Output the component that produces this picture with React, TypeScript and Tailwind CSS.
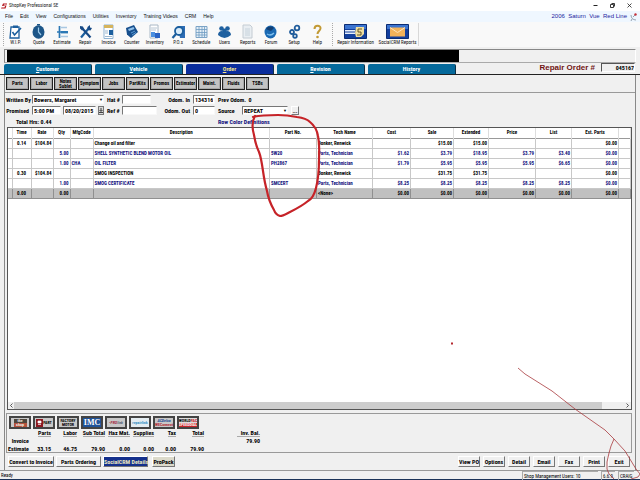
import React, { useState } from 'react';

const BLUE = '#1c5f9e';

const menus = ['File', 'Edit', 'View', 'Configurations', 'Utilities', 'Inventory', 'Training Videos', 'CRM', 'Help'];

const tools: { label: string; icon: React.ReactNode }[] = [
  {
    label: 'W.I.P.',
    icon: (
      <>
        <path d="M3 3h8v11H2z" fill="#fff" stroke={BLUE} strokeWidth="1.3" />
        <path d="M5 1.5h5V4H5z" fill={BLUE} />
        <path d="M4.5 8l2 3L13 4" fill="none" stroke={BLUE} strokeWidth="1.6" />
      </>
    ),
  },
  {
    label: 'Quote',
    icon: (
      <>
        <ellipse cx="7.5" cy="8" rx="6" ry="6.8" fill="#1d5688" />
        <path d="M7.5 3.5V8l2.5 3" fill="none" stroke="#9cc8e8" strokeWidth="1.2" />
        <path d="M6 0h3v1.5H6z" fill="#1d5688" />
      </>
    ),
  },
  {
    label: 'Estimate',
    icon: (
      <>
        <path d="M4.5 2v12M2 8h4" stroke="#2b78b5" strokeWidth="1.7" />
        <path d="M6 7h7v2.4H6z" fill="#2b78b5" />
        <path d="M6 3.5h6M6 12.5h7" stroke="#a9c8e2" strokeWidth="1.3" />
      </>
    ),
  },
  {
    label: 'Repair',
    icon: (
      <>
        <path d="M3 13.5L11 4" stroke={BLUE} strokeWidth="2.2" />
        <path d="M4 4l8.5 9.5" stroke="#174a86" strokeWidth="2.2" />
        <path d="M2 2l3 .5 1 3-2 1-2-2zM9.5 3L12 1v2.5l2 .5-1.5 2.5-3-.5z" fill="#174a86" />
      </>
    ),
  },
  {
    label: 'Invoice',
    icon: (
      <>
        <path d="M3 1h9v13.500H3z" fill="#fff" stroke="#8fb3d3" />
        <path d="M3 1h9v3H3z" fill="#d6b45c" />
        <path d="M8 6h4v5H8z" fill={BLUE} />
        <path d="M4 7h3M4 9h3M4 12.5h7" stroke="#9fb9d0" />
      </>
    ),
  },
  {
    label: 'Counter',
    icon: (
      <>
        <path d="M2 4l8-3 4 7-7 6-4-3.5z" fill="#174f8d" />
        <path d="M4 5l5.500-2 1 2L5 7z" fill="#8fc0ea" />
        <path d="M7 9l4-2M8 11l4-2.5" stroke="#5b9bd5" />
      </>
    ),
  },
  {
    label: 'Inventory',
    icon: (
      <>
        <path d="M3 1h8v13H3z" fill="#fff" stroke="#a9b8c6" />
        <path d="M4 4h6M4 6h5" stroke="#b8c6d3" />
        <path d="M4 8h4v5H4z" fill="#4a8fe0" />
        <path d="M8 9h5v5H8z" fill="#2a63c4" />
      </>
    ),
  },
  {
    label: 'P.O.s',
    icon: (
      <>
        <path d="M7 2h7v12H9z" fill="#2d6cb4" />
        <circle cx="8" cy="7" r="4" fill="#d9ecfa" stroke={BLUE} strokeWidth="1.8" />
        <path d="M5 10l-3.500 4" stroke={BLUE} strokeWidth="2.2" />
      </>
    ),
  },
  {
    label: 'Schedule',
    icon: (
      <>
        <path d="M2 2.5h11v11H2z" fill="#e4eef6" stroke="#7ba3c6" />
        <path d="M2 5.5h11M2 8.5h11M2 11h11M5 3v10M8 3v10M10.500 3v10" stroke="#6f9cc3" strokeWidth=".8" />
      </>
    ),
  },
  {
    label: 'Users',
    icon: (
      <g fill="#1f609f">
        <circle cx="4.5" cy="4.5" r="2.3" />
        <circle cx="10.5" cy="4.5" r="2.3" />
        <circle cx="7.5" cy="7" r="2.4" />
        <path d="M1 11c0-5 6-5 6.500-2C8 6 14 6 14 11l-3 2-3.500 1L4 13z" />
      </g>
    ),
  },
  {
    label: 'Reports',
    icon: (
      <>
        <path d="M3 1h7l2 2v11H3z" fill="#e9eef2" stroke="#c4ccd3" />
        <path d="M5 5h5M5 7h5M5 9h5M5 11h5" stroke="#bccad6" strokeWidth=".8" />
      </>
    ),
  },
  {
    label: 'Forum',
    icon: (
      <>
        <ellipse cx="7.5" cy="8" rx="6" ry="6.5" fill="#1a69b3" />
        <path d="M3 5c2-3 6-3 8-1L8 7 5 6z" fill="#123f73" />
        <path d="M4 10c3 2 5 1 7-1" fill="none" stroke="#7fc0ee" strokeWidth="1.3" />
      </>
    ),
  },
  {
    label: 'Setup',
    icon: (
      <g fill="none" stroke="#1f5c9b" strokeWidth="1.8">
        <circle cx="10" cy="4" r="2.3" />
        <circle cx="5" cy="8" r="2" />
        <circle cx="8" cy="12" r="1.8" />
      </g>
    ),
  },
  {
    label: 'Help',
    icon: (
      <>
        <path d="M4.5 5c0-4.500 6.500-4 6-.5C10.200 7 7.500 7 7.500 10" fill="none" stroke="#c29a35" strokeWidth="2" />
        <circle cx="7.5" cy="13" r="1.3" fill="#c29a35" />
      </>
    ),
  },
];

const tabs = ['Customer', 'Vehicle', 'Order', 'Revision', 'History'];
const actions = ['Parts', 'Labor', 'Notes Sublet', 'Symptom', 'Jobs', 'PartKits', 'Promos', 'Estimator', 'Maint.', 'Fluids', 'TSBs'];

const columns = ['', 'Time', 'Rate', 'Qty', 'MfgCode', 'Description', 'Part No.', 'Tech Name', 'Cost', 'Sale', 'Extended', 'Price', 'List', 'Est. Parts', ''];

type Line = { kind: 'labor' | 'part' | 'blank'; cells: string[] };

const lines: Line[] = [
  { kind: 'labor', cells: ['', '0.14', '$104.84', '', '', 'Change oil and filter', '', 'Bonker, Renwick', '', '$15.00', '$15.00', '', '', '$0.00', ''] },
  { kind: 'part', cells: ['', '', '', '5.00', '', 'SHELL SYNTHETIC BLEND MOTOR OIL', '5W20', 'Parts, Technician', '$1.62', '$3.79', '$18.95', '$3.79', '$3.40', '$0.00', ''] },
  { kind: 'part', cells: ['', '', '', '1.00', 'CHA', 'OIL FILTER', 'PH2867', 'Parts, Technician', '$1.79', '$5.95', '$5.95', '$5.95', '$6.65', '$0.00', ''] },
  { kind: 'labor', cells: ['', '0.30', '$104.84', '', '', 'SMOG INSPECTION', '', 'Bonker, Renwick', '', '$31.75', '$31.75', '', '', '$0.00', ''] },
  { kind: 'part', cells: ['', '', '', '1.00', '', 'SMOG CERTIFICATE', 'SMCERT', 'Parts, Technician', '$8.25', '$8.25', '$8.25', '$8.25', '$8.25', '$0.00', ''] },
  { kind: 'blank', cells: ['', '0.00', '', '0.00', '', '', '', '<None>', '$0.00', '$0.00', '$0.00', '$0.00', '$0.00', '$0.00', ''] },
];

const rowStyle = {
  labor: 'text-black border-[#c8c8c8]',
  part: 'text-[#10107c] border-[#c8c8c8]',
  blank: 'text-black bg-[#c0c0c0] border-[#909090]',
};

const cellAlign = (i: number) => {
  if (i === 1) return 'text-center';
  if (i >= 4 && i <= 7) return 'text-left';
  return 'text-right';
};

const totals = [
  ['Parts', '33.15'],
  ['Labor', '46.75'],
  ['Sub Total', '79.90'],
  ['Haz Mat.', '0.00'],
  ['Supplies', '0.00'],
  ['Tax', '0.00'],
  ['Total', '79.90'],
];

const field = 'h-[9px] min-w-0 border border-[#f8f8f8] border-t-[#777] border-l-[#777] bg-white px-px leading-[7px]';
const raised = 'h-[11px] border border-white border-r-[#777] border-b-[#777] whitespace-nowrap leading-[9px]';

const TitleBar = () => (
  <header className="flex h-[11px] items-center bg-white pr-2 pl-px text-[5px] text-[#222]">
    <svg viewBox="0 0 6 6" className="mr-[2px] h-[6px] w-[6px]">
      <path d="M6 .5H2L1 3h3l-.5 1.500H.5L0 5.500h4.500L5.500 2.500H2.500L3 1.500h3z" fill="#b3141c" />
    </svg>
    <h1>ShopKey Professional SE</h1>
    <div className="ml-auto flex gap-3">
      <button aria-label="Minimize">
        <svg viewBox="0 0 5 5" className="h-[5px] w-[5px]"><path d="M.5 2.500h4" stroke="#222" /></svg>
      </button>
      <button aria-label="Restore">
        <svg viewBox="0 0 5 5" className="h-[5px] w-[5px]"><path d="M1.500.5h3v3M.5 1.500h3v3h-3z" fill="none" stroke="#222" strokeWidth=".9" /></svg>
      </button>
      <button aria-label="Close">
        <svg viewBox="0 0 5 5" className="h-[5px] w-[5px]"><path d="M.5.5l4 4M4.500.5l-4 4" stroke="#222" strokeWidth=".8" /></svg>
      </button>
    </div>
  </header>
);

const MenuBar = () => (
  <nav className="flex h-[11px] items-center gap-[7px] bg-[#eff7ff] pr-[3px] pl-[5px] font-['Liberation_Sans',sans-serif] text-[5px] text-[#111]">
    {menus.map((m) => (
      <button key={m}>{m}</button>
    ))}
    <span className="ml-auto text-[6px] whitespace-pre text-[#2424a0]">2006  Saturn  Vue  Red Line</span>
    <svg viewBox="0 0 7 8" className="-ml-1 h-2 w-[7px]">
      <path d="M1 2c0 3 2 5 5 5M2 6L1 8M3 4l2-2" fill="none" stroke="#7f8fa0" strokeWidth=".8" />
      <circle cx="5.5" cy="1.5" r="1.2" fill="#c6303a" />
    </svg>
  </nav>
);

const ToolBar = () => (
  <div className="flex h-[25px] items-stretch bg-[#f9f9f9] pl-[3px] text-[5px] text-[#111]">
    <div className="my-px border-l border-dotted border-[#aaa]" />
    <div className="grid w-[325px] grid-cols-14">
      {tools.map((t) => (
        <button key={t.label} className="flex flex-col items-center pt-[2px]">
          <svg viewBox="0 0 15 15" className="h-[15px] w-[15px]">{t.icon}</svg>
          <span className="leading-[7px]">{t.label}</span>
        </button>
      ))}
    </div>
    <div className="my-px mr-px ml-[3px] border-l border-dotted border-[#aaa]" />
    <button className="flex w-[43px] flex-col items-center pt-[2px] whitespace-nowrap">
      <svg viewBox="0 0 23 15" className="h-[15px] w-[23px]">
        <path d="M.5.5h22v14H.5z" fill="#123f9e" stroke="#0b2c73" />
        <path d="M1 1h21v4H1z" fill="#3b74d0" />
        <path d="M1 6h10v1.500H1zM1 8.500h10V10H1z" fill="#e6eefa" />
        <path d="M12 3h8v7l-3 3h-5l-1-4z" fill="#f0dfa0" />
        <path d="M18 5h-4v3h3v3h-4" fill="none" stroke="#56471b" strokeWidth=".9" />
      </svg>
      <span className="leading-[7px]">Repair Information</span>
    </button>
    <button className="flex w-[41px] flex-col items-center pt-[2px] whitespace-nowrap">
      <svg viewBox="0 0 23 15" className="h-[15px] w-[23px]">
        <path d="M.5.5h22v14H.5z" fill="#123f9e" stroke="#0b2c73" />
        <path d="M1 1h21v4H1z" fill="#3b74d0" />
        <path d="M4 3.500h15v9H4z" fill="#f2b25a" />
        <path d="M4 3.500l7.500 5 7.500-5" fill="none" stroke="#fbe3bd" />
      </svg>
      <span className="leading-[7px]">SocialCRM Reports</span>
    </button>
    <div className="my-px border-l border-[#d8d8d8]" />
  </div>
);

const Form = () => (
  <form className="grid grid-cols-[23px_72px_12px_35px_30px_22px_1fr] items-center gap-x-[3px] pt-px pl-px text-[6px] font-bold whitespace-nowrap *:h-[11px]">
    <label htmlFor="writer" className="text-right leading-[11px]">Written By</label>
    <div className="flex items-center">
      <div className="relative flex w-full">
        <select id="writer" className={`${field} w-full appearance-none`}>
          <option>Bowers, Margaret</option>
        </select>
        <span className="pointer-events-none absolute top-px right-px text-[4px] leading-[7px]">▼</span>
      </div>
    </div>
    <label htmlFor="hat" className="leading-[11px]">Hat #</label>
    <div className="flex items-center"><input id="hat" className={`${field} w-[29px]`} /></div>
    <label htmlFor="odomIn" className="text-right leading-[11px]">Odom. In</label>
    <div className="flex items-center"><input id="odomIn" className={`${field} w-full`} defaultValue="134316" /></div>
    <div className="leading-[11px]"><span className="mr-px">Prev Odom.</span> 0</div>

    <label htmlFor="promised" className="text-right leading-[11px]">Promised</label>
    <div className="flex items-center gap-[2px]">
      <input id="promised" className={`${field} w-[29px]`} defaultValue="5:00 PM" />
      <input aria-label="Promised date" className={`${field} w-[33px]`} defaultValue="08/20/2015" />
      <button type="button" aria-label="Pick date" className="flex h-[9px] w-[6px] items-center justify-center border border-[#777] bg-[#d8d8d8]">
        <svg viewBox="0 0 4 5" className="h-[5px] w-1"><path d="M2 0v3M.5 2L2 3.500 3.500 2M0 4.500h4" fill="none" stroke="#000" strokeWidth=".7" /></svg>
      </button>
    </div>
    <label htmlFor="ref" className="leading-[11px]">Ref #</label>
    <div className="flex items-center"><input id="ref" className={`${field} w-full`} /></div>
    <label htmlFor="odomOut" className="text-right leading-[11px]">Odom. Out</label>
    <div className="flex items-center"><input id="odomOut" className={`${field} w-full`} defaultValue="0" /></div>
    <div className="flex items-center">
      <label htmlFor="source" className="w-6">Source</label>
      <div className="relative flex w-[46px]">
        <select id="source" className={`${field} w-full appearance-none`}>
          <option>REPEAT</option>
        </select>
        <span className="pointer-events-none absolute top-px right-px text-[4px] leading-[7px]">▼</span>
      </div>
      <button type="button" aria-label="More sources" className="ml-[3px] h-[9px] w-2 border border-white border-r-[#777] border-b-[#777] text-[6px] leading-[5px]">...</button>
    </div>

    <div className="col-span-6 pl-[10px] leading-[11px]">Total Hrs: 0.44</div>
    <div className="leading-[11px]">
      <button type="button" className="text-[#10107c]">Row Color Definitions</button>
    </div>
  </form>
);

const OrderLines = () => (
  <div className="mr-[3px] ml-[2px] flex flex-1 flex-col border border-[#555] bg-white">
    <table className="w-full table-fixed text-[5px] font-bold whitespace-nowrap">
      <colgroup>
        <col className="w-1" />
        <col className="w-[19px]" />
        <col className="w-[22px]" />
        <col className="w-[17px]" />
        <col className="w-[23px]" />
        <col />
        <col className="w-[47px]" />
        <col className="w-[56px]" />
        <col className="w-[38px]" />
        <col className="w-[43px]" />
        <col className="w-[35px]" />
        <col className="w-[47px]" />
        <col className="w-[36px]" />
        <col className="w-[47px]" />
        <col className="w-[12px]" />
      </colgroup>
      <thead>
        <tr className="h-[10px] border-b border-[#999]">
          {columns.map((c, i) => (
            <th key={i} className="border-r border-[#ddd] p-0 text-[5px] leading-[9px]">{c}</th>
          ))}
        </tr>
      </thead>
      <tbody>
        {lines.map((line, r) => (
          <tr key={r} className={`h-[10px] border-b ${rowStyle[line.kind]}`}>
            {line.cells.map((c, i) => (
              <td key={i} className={`border-r border-inherit px-px py-0 leading-[9px] ${cellAlign(i)}`}>{c}</td>
            ))}
          </tr>
        ))}
      </tbody>
    </table>
    <div className="mt-auto flex h-[7px] items-center bg-[#f0f0f0] px-[2px]">
      <svg viewBox="0 0 3 5" className="h-[5px] w-[3px]"><path d="M2.500.5l-2 2 2 2" fill="none" stroke="#333" strokeWidth=".8" /></svg>
      <div className="ml-px h-[7px] w-[95%] bg-[#cdcdcd]" />
      <svg viewBox="0 0 3 5" className="ml-auto h-[5px] w-[3px]"><path d="M.5.5l2 2-2 2" fill="none" stroke="#333" strokeWidth=".8" /></svg>
    </div>
  </div>
);

const vendorBox = 'flex h-[13px] w-[22px] flex-col items-center justify-center overflow-hidden border-2 border-[#444] text-[4px] leading-[4px] font-bold whitespace-nowrap';

const Vendors = () => (
  <div className="flex gap-[2px] pt-[2px] pl-[2px]">
    <button className={`${vendorBox} bg-[#c8c8c8]`}>
      <span className="w-[13px] bg-[#4e463c] text-[#eee]">the</span>
      <span className="h-1 w-[13px] bg-[#b4523c] text-[#eee]">shop</span>
    </button>
    <button className={`${vendorBox} bg-[#c8c8c8]`}>
      <span className="flex items-center">
        <svg viewBox="0 0 7 8" className="h-2 w-[7px]">
          <path d="M0 0h7v8H0z" fill="#8c1820" />
          <path d="M2 2h3v2H2zM2 5.500h3" fill="#fff" stroke="#fff" strokeWidth=".7" />
        </svg>
        PART
      </span>
    </button>
    <button className={`${vendorBox} bg-[#c8c8c8]`}><span>FACTORY</span><span>MOTOR</span></button>
    <button className={`${vendorBox} bg-[#1f5298]`}><span className="font-['Liberation_Serif',serif] text-[8px] leading-[9px] text-white">IMC</span></button>
    <button className={`${vendorBox} bg-[#c8c8c8]`}><span className="text-[#a3283c] italic">•PRO<span className="text-[#567]">link</span></span></button>
    <button className={`${vendorBox} bg-[#e4edf2]`}><span className="text-[#3e8fc4]">repairlink</span></button>
    <button className={`${vendorBox} bg-[#c8c8c8]`}><span className="text-[#1d4b8f] italic">ACDelco</span><span className="text-[#b02c34]">WEConnect</span></button>
    <button className={`${vendorBox} bg-[#ddd]`}><span>WORLD<span className="text-[#c22]">PAC</span></span><span className="bg-[#c9262c] text-white">SPEEDDIAL</span></button>
  </div>
);

const Totals = () => (
  <table className="table-fixed text-right text-[6px] font-bold whitespace-nowrap">
    <colgroup>
      <col className="w-[22px]" />
      <col className="w-[22px]" />
      <col className="w-[26px]" />
      <col className="w-[28px]" />
      <col className="w-[25px]" />
      <col className="w-[24px]" />
      <col className="w-[22px]" />
      <col className="w-[28px]" />
      <col className="w-[56px]" />
    </colgroup>
    <thead>
      <tr className="h-2 leading-[7px]">
        <th className="p-0" />
        {totals.map(([name]) => (
          <th key={name} className="p-0"><span className="inline-block border-b border-[#aaa]">{name}</span></th>
        ))}
        <th className="p-0"><span className="inline-block w-[23px] border-b border-[#aaa]">Inv. Bal.</span></th>
      </tr>
    </thead>
    <tbody className="leading-[8px]">
      <tr>
        <th className="p-0">Invoice</th>
        {totals.map(([name]) => <td key={name} className="p-0" />)}
        <td className="p-0">79.90</td>
      </tr>
      <tr>
        <th className="p-0">Estimate</th>
        {totals.map(([name, value]) => <td key={name} className="p-0">{value}</td>)}
        <td className="p-0" />
      </tr>
    </tbody>
  </table>
);

const Footer = () => (
  <div className="flex h-[17px] items-center pr-[5px] pl-[3px] text-[6px] font-bold">
    <button className={`${raised} mr-[2px] w-[46px]`}>Convert to Invoice</button>
    <button className={`${raised} mr-[2px] w-[45px]`}>Parts Ordering</button>
    <button className={`${raised} mr-1 w-[45px] bg-[#14308c] text-[#e8e4c0]`}>SocialCRM Details</button>
    <button className={`${raised} w-[23px] bg-[#dcdacb]`}>ProPack</button>
    <div className="ml-auto flex gap-[3px]">
      {['View PO', 'Options', 'Detail', 'Email', 'Fax', 'Print', 'Exit'].map((b) => (
        <button key={b} className={`${raised} w-[22px]`}>{b}</button>
      ))}
    </div>
  </div>
);

// red pen marks drawn over the screen
const Markup = () => (
  <svg viewBox="0 0 640 480" preserveAspectRatio="none" className="pointer-events-none absolute inset-0 h-full w-full" fill="none">
    <path
      d="M253 117C260 115 270 115 278 115C286 115 292 116 297 117C304 118 307 119 310 122C315 126 317 130 318 136C320 145 319 152 319 160C319 172 318 180 316 188C314 196 312 199 308 201C302 206 296 209 290 212C286 214 283 216 280 216C277 215 275 213 274 210C270 203 268 197 267 191C265 184 264 178 263 171C262 164 261 157 259 152C256 146 255 141 254 135C252 128 252 121 255 116"
      stroke="#c62328"
      strokeWidth="2.2"
      strokeLinecap="round"
    />
    <path d="M518 368L525 374L552 391L575 409L605 430L614 439L625 451L636 469L640 474L638 477L631 479" stroke="#a83a3e" strokeWidth=".8" />
    <path d="M614 439L611 446L609 453L607 462L607 469L609 474L614 479" stroke="#a83a3e" strokeWidth=".8" />
    <path d="M451 342.500h2v2h-2z" fill="#b52a30" />
  </svg>
);

const App: React.FC = () => {
  const [tab, setTab] = useState('Order');

  return (
    <div className="relative flex min-h-screen w-full flex-col bg-[#f0f0f0] font-['Liberation_Sans_Narrow','Roboto_Condensed','Liberation_Sans',sans-serif] text-black">
      <TitleBar />
      <MenuBar />
      <ToolBar />

      {/* Customer banner, blacked out */}
      <div className="mx-1 mt-[2px] flex h-[14px] border border-[#888] border-r-white border-b-[#aaa] pl-[2px]">
        <div className="w-[72%] bg-black" />
      </div>

      <div className="flex h-[12px] items-end border-b border-[#222] pr-[5px] pl-1">
        <div className="flex gap-[3px]">
          {tabs.map((t) => (
            <button
              key={t}
              onClick={() => setTab(t)}
              className={`h-[10px] w-[88px] rounded-t-[2px] border-r border-[#0a3048] text-[6px] leading-[10px] font-bold ${t === tab ? 'bg-[#0a2d9c] text-[#f0e08a]' : 'bg-[#05699b] text-white'}`}
            >
              {t === 'History' ? <>His<u>t</u>ory</> : <><u>{t[0]}</u>{t.slice(1)}</>}
            </button>
          ))}
        </div>
        <label htmlFor="ro" className="ml-auto pr-[6px] font-['Liberation_Sans',sans-serif] text-[8px] leading-[12px] font-bold text-[#701414]">Repair Order #</label>
        <input
          id="ro"
          readOnly
          defaultValue="045167"
          className="mb-[2px] h-[9px] w-[34px] border border-white border-t-[#555] border-l-[#555] bg-[#f0f0f0] text-right text-[6px] leading-[7px] font-bold"
        />
      </div>

      <main className="mx-1 flex flex-1 flex-col border-x border-[#888]">
        <div className="flex h-[18px] items-center gap-px border-b border-[#999] pl-px">
          {actions.map((a) => (
            <button
              key={a}
              className={`h-[13px] w-[23px] border border-[#222] bg-[#c3c3c3] text-center text-[5px] font-bold outline-1 -outline-offset-2 outline-[#a8a8a8] ${a === 'Notes Sublet' ? 'leading-[5px]' : 'leading-[11px]'}`}
            >
              {a}
            </button>
          ))}
        </div>
        <Form />
        <OrderLines />
        <section className="mt-[3px] mr-[3px] ml-px h-10 border border-[#999]">
          <Vendors />
          <Totals />
        </section>
        <Footer />
      </main>

      <footer className="flex h-[10px] items-center border-t border-b border-t-[#999] border-b-[#1c3358] pr-[6px] pl-px text-[5px] leading-[8px]">
        <span>Ready</span>
        <div className="ml-auto flex gap-[3px] *:border-t *:border-l *:border-[#aaa] *:pl-px">
          <span className="w-[76px]">Shop Management Users: 10</span>
          <span className="w-[14px]">6.6.9.</span>
          <span className="w-[16px]">CRAIG</span>
        </div>
      </footer>
      <Markup />
    </div>
  );
};

export default App;
